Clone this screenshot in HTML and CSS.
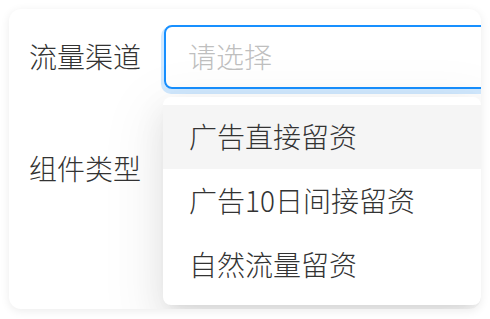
FILE: index.html
```html
<!DOCTYPE html>
<html lang="zh-CN">
<head>
<meta charset="utf-8">
<link rel="stylesheet" href="styles.css">
</head>
<body>
<div class="card">
  <div class="row">
    <div class="label">流量渠道</div>
    <div class="control">
      <div class="select focused"><span class="placeholder">请选择</span></div>
    </div>
  </div>
  <div class="row">
    <div class="label">组件类型</div>
    <div class="control">
      <div class="select"></div>
    </div>
  </div>
  <div class="dropdown">
    <div class="option active">广告直接留资</div>
    <div class="option">广告10日间接留资</div>
    <div class="option">自然流量留资</div>
  </div>
</div>
</body>
</html>
```
FILE: styles.css
```css
* { box-sizing: border-box; }
html, body { margin: 0; padding: 0; background: #fff; }
body {
  font-family: "Noto Sans CJK SC", "Noto Sans", sans-serif;
  font-weight: 300;
  width: 490px;
  height: 319px;
  overflow: hidden;
}
.card {
  position: relative;
  margin: 9px;
  width: 472px;
  height: 300px;
  background: #fff;
  border-radius: 12px;
  box-shadow: 0 2px 10px rgba(0, 0, 0, 0.08);
  overflow: hidden;
  padding: 16px 0 0 20px;
}
.row {
  display: flex;
  align-items: center;
  height: 64px;
  margin-bottom: 48px;
}
.label {
  width: 135px;
  flex: none;
  font-size: 28px;
  color: #333;
  line-height: 1;
  padding-bottom: 2px;
}
.control { flex: none; width: 340px; }
.select {
  height: 64px;
  border: 2px solid transparent;
  border-radius: 8px;
  display: flex;
  align-items: center;
  padding-left: 22px;
}
.select.focused {
  border-color: #1890ff;
  box-shadow: -1px 3px 0 2px rgba(24, 144, 255, 0.2);
}
.placeholder {
  font-size: 28px;
  color: #bfbfbf;
  line-height: 1;
  padding-bottom: 2px;
}
.dropdown {
  position: absolute;
  left: 154px;
  top: 88px;
  width: 318px;
  padding: 8px 0;
  background: #fff;
  border-radius: 8px;
  box-shadow: 0 6px 12px -8px rgba(0, 0, 0, 0.12), 0 12px 32px 0 rgba(0, 0, 0, 0.08), 0 18px 56px 16px rgba(0, 0, 0, 0.05);
}
.option {
  height: 64px;
  display: flex;
  align-items: center;
  padding-left: 26px;
  padding-bottom: 2px;
  font-size: 28px;
  color: #333;
  line-height: 1;
}
.option.active { background: #f5f5f5; }
```
